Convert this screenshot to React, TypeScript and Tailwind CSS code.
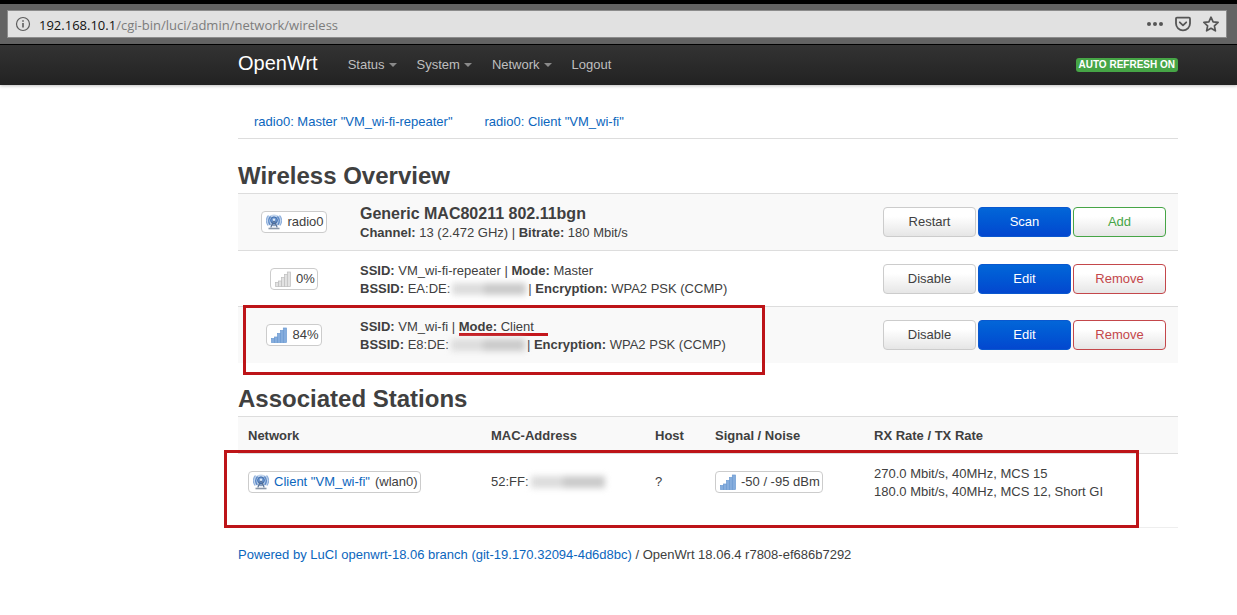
import type { ReactNode } from "react";

function AntennaIcon() {
  return (
    <svg width="16" height="16" viewBox="0 0 16 16" fill="none" aria-hidden="true" className="shrink-0">
      <ellipse cx="8" cy="6.500" rx="7.500" ry="6" fill="#c3d6ee" />
      <path d="M2.500 1.500C-.3 4.500-.3 8.500 2.300 11.500M13.500 1.500c2.800 3 2.800 7 .2 10" stroke="#8fb0dc" strokeWidth="1.200" />
      <path d="M4.600 2.500C2.200 5 2.200 8 4.200 10.800M11.400 2.500c2.400 2.500 2.400 5.500.4 8.300" stroke="#5b88c6" strokeWidth="1.400" />
      <circle cx="8" cy="6.300" r="3.400" fill="#6b95cf" stroke="#3f6dab" strokeWidth="1" />
      <circle cx="8" cy="5.800" r="1.200" fill="#dce9f8" />
      <path d="M7.500 7 4.800 13.500M8.500 7l2.700 6.500M6 11h4" stroke="#566f92" strokeWidth="1.100" />
      <path d="M2.500 14.500h11" stroke="#8a97a8" strokeWidth="1.600" />
    </svg>
  );
}

function SignalIcon({ active }: { active: boolean }) {
  const fill = active ? "#86addd" : "#e2e2e2";
  const stroke = active ? "#6c9ad2" : "#bdbdbd";
  return (
    <svg width="16" height="16" viewBox="0 0 16 16" fill={fill} stroke={stroke} strokeWidth="0.7" aria-hidden="true" className="shrink-0">
      <rect x="0.500" y="11.500" width="3.200" height="4" />
      <rect x="3.500" y="10" width="3.200" height="5.500" />
      <rect x="6.500" y="6.500" width="3.200" height="9" />
      <rect x="9.500" y="3.500" width="3.200" height="12" />
      <rect x="12.300" y="1" width="3.200" height="14.500" />
    </svg>
  );
}

function Badge({ icon, children }: { icon: ReactNode; children: ReactNode }) {
  return (
    <span className="inline-flex h-[22px] items-center gap-[5px] whitespace-nowrap rounded border border-[#ccc] bg-white pl-1 pr-0.5 align-middle">
      {icon}
      {children}
    </span>
  );
}

function Smudge() {
  return (
    <span aria-hidden="true" className="inline-flex h-[18px] w-[78px] items-center px-0.5 align-top blur-[3px]">
      <span className="h-3 w-8 bg-[#dcdcdc]" />
      <span className="h-3 flex-1 bg-[#cacaca]" />
    </span>
  );
}

const buttonStyles = {
  plain: "border-[#ccc] bg-linear-to-b from-white from-30% to-[#e6e6e6] text-[#404040]",
  primary: "border-[#0a58cf] bg-linear-to-b from-[#0366d8] to-[#0447cf] text-white",
  add: "border-[#46a546] bg-linear-to-b from-white from-30% to-[#e6e6e6] text-[#46a546]",
  remove: "border-[#c4474b] bg-linear-to-b from-white from-30% to-[#e6e6e6] text-[#c4474b]",
};

function Button({ kind, children }: { kind: keyof typeof buttonStyles; children: ReactNode }) {
  return (
    <button type="button" className={`h-[30px] w-[93px] rounded border leading-[18px] ${buttonStyles[kind]}`}>
      {children}
    </button>
  );
}

function MenuItem({ label, caret = true }: { label: string; caret?: boolean }) {
  return (
    <a href="#" className="flex items-center gap-1">
      {label}
      {caret && (
        <svg width="8" height="4" viewBox="0 0 8 4" fill="#8a8a8a" aria-hidden="true">
          <path d="M0 0h8L4 4z" />
        </svg>
      )}
    </a>
  );
}

function AddressBar() {
  return (
    <div className="border-b border-black border-t-4 bg-[#636363] pb-1.5 pl-[7px] pr-2.5 pt-1.5">
      <div className="flex h-7 items-center border border-[#8c8c8c] bg-[#e1e1e1] px-[7px]">
        <svg width="16" height="16" viewBox="0 0 16 16" fill="none" stroke="#5c5c5c" aria-hidden="true">
          <circle cx="8" cy="8" r="6.500" strokeWidth="1.200" />
          <path d="M8 7v4.500M8 4.300v1.500" strokeWidth="1.600" />
        </svg>
        <p className="ml-2 flex-1 pt-0.5 font-['Open_Sans',sans-serif] text-[13px] leading-5 text-[#7c7c7c]">
          <span className="text-[#111]">192.168.10.1</span>/cgi-bin/luci/admin/network/wireless
        </p>
        <div className="flex items-center gap-3">
          <button type="button" aria-label="Page actions">
            <svg width="16" height="16" viewBox="0 0 16 16" fill="#555">
              <circle cx="2" cy="8" r="2" />
              <circle cx="8" cy="8" r="2" />
              <circle cx="14" cy="8" r="2" />
            </svg>
          </button>
          <button type="button" aria-label="Save to Pocket">
            <svg width="16" height="16" viewBox="0 0 16 16" fill="none" stroke="#555" strokeWidth="1.800" strokeLinecap="round" strokeLinejoin="round">
              <path d="M2 1.700h12a1 1 0 0 1 1 1V7.500a7 6.800 0 0 1-14 0V2.700a1 1 0 0 1 1-1z" />
              <path d="M4.800 6.300 8 9.300l3.200-3" />
            </svg>
          </button>
          <button type="button" aria-label="Bookmark this page">
            <svg width="16" height="16" viewBox="0 0 16 16" fill="none" stroke="#555" strokeWidth="1.700" strokeLinejoin="round">
              <path d="M8 1.200l2.100 4.600 5 .6-3.700 3.400 1 5L8 12.300l-4.400 2.500 1-5L.9 6.400l5-.6z" />
            </svg>
          </button>
        </div>
      </div>
    </div>
  );
}

const tableRow = "border-t border-[#ddd] odd:bg-[#f9f9f9]";

function InterfaceRow({ percent, active, ssid, mode, bssid }: { percent: string; active: boolean; ssid: string; mode: ReactNode; bssid: string }) {
  return (
    <tr className={tableRow}>
      <td className="h-14 text-center">
        <Badge icon={<SignalIcon active={active} />}>{percent}</Badge>
      </td>
      <td className="pl-2.5 pt-0.5">
        <p>
          <b>SSID:</b> {ssid} | {mode}
        </p>
        <p className="whitespace-nowrap">
          <b>BSSID:</b> {bssid}
          <Smudge />| <b>Encryption:</b> WPA2 PSK (CCMP)
        </p>
      </td>
      <td className="pr-3">
        <div className="flex justify-end gap-0.5">
          <Button kind="plain">Disable</Button>
          <Button kind="primary">Edit</Button>
          <Button kind="remove">Remove</Button>
        </div>
      </td>
    </tr>
  );
}

export default function App() {
  return (
    <div className="min-h-screen bg-white font-['Liberation_Sans',Arial,sans-serif] text-[13px] leading-[18px] text-[#404040]">
      <AddressBar />
      <header className="flex h-10 items-center bg-linear-to-b from-[#333] to-[#222] pl-[238px] pr-[59px] text-[#bfbfbf] shadow-[0_1px_3px_rgba(0,0,0,0.25)]">
        <a href="#" className="mb-1 text-xl leading-6 text-white">OpenWrt</a>
        <nav className="ml-[30px] flex flex-1 gap-5">
          <MenuItem label="Status" />
          <MenuItem label="System" />
          <MenuItem label="Network" />
          <MenuItem label="Logout" caret={false} />
        </nav>
        <button type="button" className="rounded-[3px] bg-[#46a546] px-[3px] text-[10px] font-bold uppercase leading-[14px] text-white">
          Auto Refresh on
        </button>
      </header>

      <main className="pl-[238px] pr-[59px] pt-5">
        <nav className="flex h-[34px] items-center gap-8 border-b border-[#ddd] px-4 text-[#0b66bd]">
          <a href="#">radio0: Master "VM_wi-fi-repeater"</a>
          <a href="#">radio0: Client "VM_wi-fi"</a>
        </nav>

        <h2 className="mt-5 text-2xl font-bold leading-[34px]">Wireless Overview</h2>
        <div className="relative">
          <table className="w-full table-fixed border-collapse">
            <colgroup>
              <col className="w-28" />
              <col />
              <col className="w-[300px]" />
            </colgroup>
            <tbody>
              <tr className={tableRow}>
                <td className="h-[57px] text-center">
                  <Badge icon={<AntennaIcon />}>radio0</Badge>
                </td>
                <td className="pl-2.5 pt-0.5">
                  <p className="text-base font-bold leading-5">Generic MAC80211 802.11bgn</p>
                  <p>
                    <b>Channel:</b> 13 (2.472 GHz) | <b>Bitrate:</b> 180 Mbit/s
                  </p>
                </td>
                <td className="pr-3">
                  <div className="flex justify-end gap-0.5">
                    <Button kind="plain">Restart</Button>
                    <Button kind="primary">Scan</Button>
                    <Button kind="add">Add</Button>
                  </div>
                </td>
              </tr>
              <InterfaceRow percent="0%" active={false} ssid="VM_wi-fi-repeater" mode={<><b>Mode:</b> Master</>} bssid="EA:DE:" />
              <InterfaceRow
                percent="84%"
                active
                ssid="VM_wi-fi"
                mode={
                  <span className="relative">
                    <b>Mode:</b> Client
                    <span className="absolute -right-3.5 -bottom-0.5 left-0 h-[3px] bg-[#c4161c]" />
                  </span>
                }
                bssid="E8:DE:"
              />
            </tbody>
          </table>
          <div className="pointer-events-none absolute -bottom-3 left-[5px] h-[70px] w-[522px] border-[3px] border-[#bd1418]" />
        </div>

        <h2 className="mt-[19px] text-2xl font-bold leading-[34px]">Associated Stations</h2>
        <div className="relative">
          <table className="w-full table-fixed border-collapse border-b border-[#eee] text-left">
            <thead>
              <tr className={tableRow}>
                <th className="h-[37px] w-[243px] px-2.5 pt-0.5">Network</th>
                <th className="w-[164px] px-2.5 pt-0.5">MAC-Address</th>
                <th className="w-[60px] px-2.5 pt-0.5">Host</th>
                <th className="w-[159px] px-2.5 pt-0.5">Signal / Noise</th>
                <th className="px-2.5 pt-0.5">RX Rate / TX Rate</th>
              </tr>
            </thead>
            <tbody>
              <tr className="border-t border-[#ddd]">
                <td className="h-[74px] px-2.5 pb-4">
                  <Badge icon={<AntennaIcon />}>
                    <a href="#" className="text-[#0b66bd]">Client "VM_wi-fi"</a> (wlan0)
                  </Badge>
                </td>
                <td className="whitespace-nowrap px-2.5 pb-4">
                  52:FF:
                  <Smudge />
                </td>
                <td className="px-2.5 pb-4">?</td>
                <td className="px-2.5 pb-4">
                  <Badge icon={<SignalIcon active />}>-50 / -95 dBm</Badge>
                </td>
                <td className="px-2.5 pb-3.5">
                  270.0 Mbit/s, 40MHz, MCS 15
                  <br />
                  180.0 Mbit/s, 40MHz, MCS 12, Short GI
                </td>
              </tr>
            </tbody>
          </table>
          <div className="pointer-events-none absolute -left-3.5 bottom-0 right-[39px] h-[78px] border-[3px] border-[#bd1418]" />
        </div>

        <footer className="mt-[18px]">
          <a href="#" className="text-[#0b66bd]">Powered by LuCI openwrt-18.06 branch (git-19.170.32094-4d6d8bc)</a> / OpenWrt 18.06.4 r7808-ef686b7292
        </footer>
      </main>
    </div>
  );
}
